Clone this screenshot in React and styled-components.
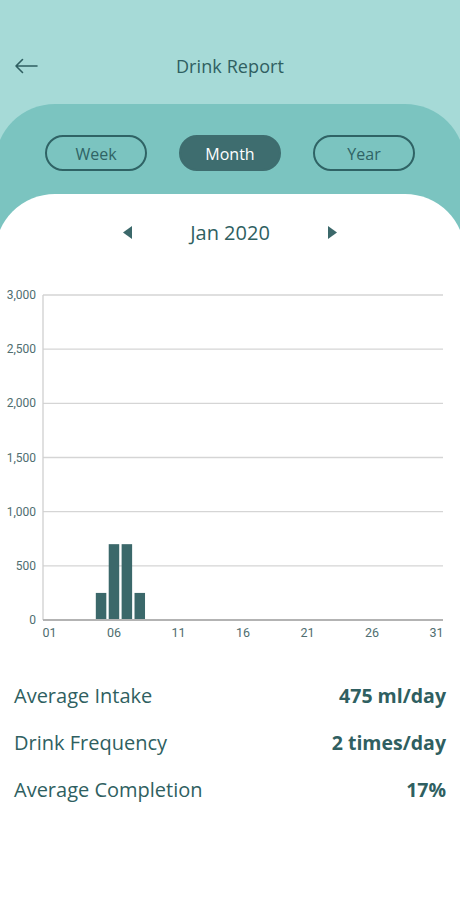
import React from "react";
import styled, { createGlobalStyle } from "styled-components";

const GlobalStyle = createGlobalStyle`
  html, body { margin: 0; padding: 0; background: #ffffff; }
  body { font-family: "Open Sans", "Noto Sans", sans-serif; overflow-x: hidden; }
  * { box-sizing: border-box; }
`;

const INK = "#2f5f61";

const Page = styled.div`
  width: 460px;
  min-height: 900px;
  background: #a6dad7;
  overflow: hidden;
  display: flex;
  flex-direction: column;
`;

const Header = styled.header`
  height: 104px;
  padding-top: 48px;
  position: relative;
`;

const HeaderRow = styled.div`
  height: 36px;
  display: flex;
  align-items: center;
  justify-content: center;
  position: relative;
`;

const BackButton = styled.button`
  position: absolute;
  left: 12px;
  top: 6px;
  width: 28px;
  height: 24px;
  padding: 0;
  border: 0;
  background: transparent;
  display: flex;
  align-items: center;
  justify-content: center;
`;

const Title = styled.h1`
  margin: 0;
  font-size: 18px;
  font-weight: 400;
  color: ${INK};
  letter-spacing: 0.1px;
`;

const Sheet = styled.section`
  margin: 0 -5px;
  flex: 1;
  background: #7bc4c0;
  border-radius: 60px 60px 0 0;
  display: flex;
  flex-direction: column;
`;

const Tabs = styled.div`
  padding: 31px 0 23px;
  display: flex;
  justify-content: center;
  gap: 32px;
`;

const Tab = styled.button`
  width: 102px;
  height: 36px;
  border-radius: 18px;
  border: 2px solid ${(p) => (p.$active ? "#3e6d6f" : "#2f6365")};
  background: ${(p) => (p.$active ? "#3e6d6f" : "transparent")};
  color: ${(p) => (p.$active ? "#ffffff" : "#2f6365")};
  font-family: "Open Sans", "Noto Sans", sans-serif;
  font-size: 16px;
  font-weight: 400;
  padding: 1px 0 0;
  cursor: pointer;
`;

const Content = styled.div`
  flex: 1;
  background: #ffffff;
  border-radius: 60px 60px 0 0;
  padding: 0 5px;
  display: flex;
  flex-direction: column;
`;

const DateNav = styled.div`
  height: 76px;
  display: grid;
  grid-template-columns: 9px 196px 9px;
  justify-content: center;
  align-items: center;
`;

const Arrow = styled.button`
  width: 9px;
  height: 13px;
  padding: 0;
  border: 0;
  background: transparent;
  display: block;
`;

const DateLabel = styled.div`
  text-align: center;
  font-size: 20px;
  color: ${INK};
`;

const ChartSvg = styled.svg`
  display: block;
  width: 460px;
  height: 370px;
`;

const Stats = styled.div`
  padding: 32px 14px 0;
  display: flex;
  flex-direction: column;
`;

const StatRow = styled.div`
  height: 47px;
  display: flex;
  align-items: center;
  justify-content: space-between;
  color: ${INK};
`;

const StatLabel = styled.span`
  font-size: 20px;
  font-weight: 400;
`;

const StatValue = styled.span`
  font-size: 19.5px;
  font-weight: 700;
`;

const Y_TOP = 25;
const Y_BOT = 350;
const X_L = 43;
const X_R = 443;
const MAX = 3000;
const days = 31;
const band = (X_R - X_L) / days;
const data = { 5: 250, 6: 700, 7: 700, 8: 250 };

function Chart() {
  const ticks = [0, 500, 1000, 1500, 2000, 2500, 3000];
  const yOf = (v) => Y_BOT - (v / MAX) * (Y_BOT - Y_TOP);
  const xOf = (d) => X_L + (d - 0.5) * band;
  return (
    <ChartSvg viewBox="0 0 460 370">
      {ticks.map((t) => (
        <g key={t}>
          {t > 0 && (
            <line x1={X_L} x2={X_R} y1={yOf(t)} y2={yOf(t)} stroke="#d5d5d5" strokeWidth="1.3" />
          )}
          <text
            x={36}
            y={yOf(t) + 4}
            textAnchor="end"
            fontFamily="Roboto, 'Liberation Sans', sans-serif"
            fontSize="12"
            fill="#4f6e70"
          >
            {t.toLocaleString("en-US")}
          </text>
        </g>
      ))}
      <line x1={X_L} x2={X_L} y1={Y_TOP} y2={Y_BOT} stroke="#cfcfcf" strokeWidth="1.3" />
      {Object.entries(data).map(([d, v]) => (
        <rect
          key={d}
          x={xOf(Number(d)) - 5.25}
          y={yOf(v)}
          width={10.5}
          height={Y_BOT - yOf(v)}
          fill="#3b686a"
        />
      ))}
      <line x1={X_L} x2={X_R} y1={Y_BOT} y2={Y_BOT} stroke="#b3b3b3" strokeWidth="2" />
      {[1, 6, 11, 16, 21, 26, 31].map((d) => (
        <text
          key={d}
          x={xOf(d)}
          y={Y_BOT + 17}
          textAnchor="middle"
          fontFamily="Roboto, 'Liberation Sans', sans-serif"
          fontSize="12.5"
          fill="#4f6e70"
        >
          {String(d).padStart(2, "0")}
        </text>
      ))}
    </ChartSvg>
  );
}

export default function App() {
  return (
    <>
      <GlobalStyle />
      <Page>
        <Header>
          <HeaderRow>
            <BackButton aria-label="Back">
              <svg width="26" height="16" viewBox="0 0 26 16">
                <path
                  d="M24 8 H3 M9.5 1.5 L3 8 L9.5 14.5"
                  fill="none"
                  stroke={INK}
                  strokeWidth="1.6"
                  strokeLinecap="round"
                  strokeLinejoin="round"
                />
              </svg>
            </BackButton>
            <Title>Drink Report</Title>
          </HeaderRow>
        </Header>
        <Sheet>
          <Tabs>
            <Tab>Week</Tab>
            <Tab $active>Month</Tab>
            <Tab>Year</Tab>
          </Tabs>
          <Content>
            <DateNav>
              <Arrow aria-label="Previous month">
                <svg width="9" height="13" viewBox="0 0 9 13">
                  <path d="M9 0 L0 6.5 L9 13 Z" fill="#3b686a" />
                </svg>
              </Arrow>
              <DateLabel>Jan 2020</DateLabel>
              <Arrow aria-label="Next month">
                <svg width="9" height="13" viewBox="0 0 9 13">
                  <path d="M0 0 L9 6.5 L0 13 Z" fill="#3b686a" />
                </svg>
              </Arrow>
            </DateNav>
            <Chart />
            <Stats>
              <StatRow>
                <StatLabel>Average Intake</StatLabel>
                <StatValue>475 ml/day</StatValue>
              </StatRow>
              <StatRow>
                <StatLabel>Drink Frequency</StatLabel>
                <StatValue>2 times/day</StatValue>
              </StatRow>
              <StatRow>
                <StatLabel>Average Completion</StatLabel>
                <StatValue>17%</StatValue>
              </StatRow>
            </Stats>
          </Content>
        </Sheet>
      </Page>
    </>
  );
}
